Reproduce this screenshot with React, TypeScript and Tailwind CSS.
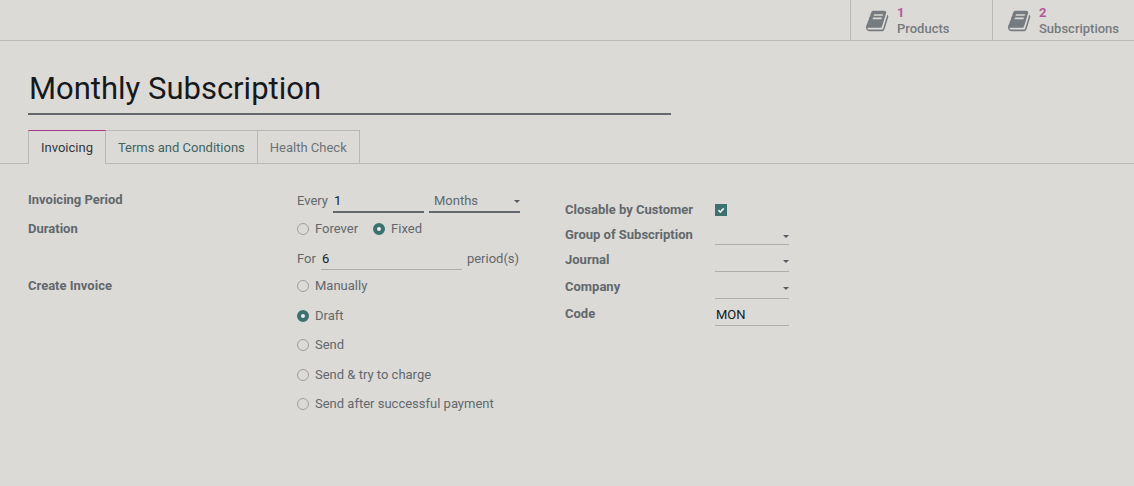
import { useState } from "react";

const BOOK =
  "M1639 478q40 57 18 129l-275 906q-19 64-76.5 107.5t-122.5 43.5h-923q-77 0-148.5-53.5t-99.5-131.5q-24-67-2-127 0-4 3-27t4-37q1-8-3-21.5t-3-19.5q2-11 8-21t16.5-23.5 16.5-23.5q23-38 45-91.5t30-91.5q3-10 .5-30t-.5-28q3-11 17-28t17-23q21-36 42-92t25-90q1-9-2.5-32t.5-28q4-13 22-30.5t22-22.5q19-26 42.5-84.5t27.5-96.5q1-8-3-25.5t-2-26.5q2-8 9-18t18-23 17-21q8-12 16.5-30.5t15-35 16-36 19.5-32 26.5-23.5 36-11.5 47.5 5.5l-1 3q38-9 51-9h761q74 0 114 56t18 130l-274 906q-36 119-71.5 153.5t-128.5 34.5h-869q-27 0-38 15-11 16-1 43 24 70 144 70h923q29 0 56-15.5t35-41.5l300-987q7-22 5-57 38 15 59 43zm-1064 2q-4 13 2 22.5t20 9.5h608q13 0 25.5-9.5t16.5-22.5l21-64q4-13-2-22.5t-20-9.5h-608q-13 0-25.5 9.5t-16.5 22.5zm-83 256q-4 13 2 22.5t20 9.5h608q13 0 25.5-9.5t16.5-22.5l21-64q4-13-2-22.5t-20-9.5h-608q-13 0-25.5 9.5t-16.5 22.5z";

function StatButton({ count, label }: { count: number; label: string }) {
  return (
    <button type="button" className="flex h-10 w-[142px] items-center gap-[7px] border-l border-[#b9b8b5] pl-[15px] pt-0.5 text-left">
      <svg viewBox="0 0 1792 1792" className="size-6 shrink-0 fill-[#767b80]" aria-hidden="true">
        <path d={BOOK} />
      </svg>
      <span className="flex flex-col font-medium leading-4">
        <span className="font-bold text-[#b4599a]">{count}</span>
        <span className="text-[#767b80]">{label}</span>
      </span>
    </button>
  );
}

function Radio({ name, label, checked, onPick }: { name: string; label: string; checked: boolean; onPick: () => void }) {
  return (
    <label className="flex h-5 items-center gap-1.5">
      <input
        type="radio"
        name={name}
        checked={checked}
        onChange={onPick}
        className="size-3 shrink-0 appearance-none rounded-full border border-[#a09f9b] checked:border-4 checked:border-[#3b7270] checked:bg-[#eeedeb]"
      />
      {label}
    </label>
  );
}

function Caret() {
  return (
    <svg viewBox="0 0 6 3" className="pointer-events-none absolute right-0 top-1/2 h-[3px] w-1.5" aria-hidden="true">
      <path d="M0 0h6L3 3z" fill="#555b60" />
    </svg>
  );
}

function SelectRow({ id, label, tall }: { id: string; label: string; tall?: boolean }) {
  return (
    <div className="flex items-start">
      <label htmlFor={id} className="w-[150px] font-bold leading-5">
        {label}
      </label>
      <div className={tall ? "w-[74px] border-b border-[#b0aeab] pb-0.5" : "w-[74px] border-b border-[#b0aeab]"}>
        <div className="relative">
          <select id={id} className="block h-[19px] w-full appearance-none bg-transparent outline-none">
            <option value=""></option>
          </select>
          <Caret />
        </div>
      </div>
    </div>
  );
}

const TABS = [
  { label: "Invoicing", color: "text-[#33383d]" },
  { label: "Terms and Conditions", color: "text-[#3f6461]" },
  { label: "Health Check", color: "text-[#6d7276]" },
];

const INVOICE_MODES = ["Manually", "Draft", "Send", "Send & try to charge", "Send after successful payment"];

export default function App() {
  const [tab, setTab] = useState(0);
  const [duration, setDuration] = useState("Fixed");
  const [mode, setMode] = useState("Draft");

  return (
    <main className="min-h-screen bg-[#dbdad6] font-['Roboto','Liberation_Sans',sans-serif] text-[13px] leading-5 text-[#62686d]">
      <header className="flex justify-end border-b border-[#b9b8b5]">
        <StatButton count={1} label="Products" />
        <StatButton count={2} label="Subscriptions" />
      </header>

      <div className="px-7 pt-6">
        <input
          aria-label="Name"
          defaultValue="Monthly Subscription"
          className="block h-[50px] w-[643px] max-w-full border-b-2 border-[#62686d] bg-transparent pb-0.5 pl-px text-[31px] text-[#16191c] outline-none"
        />
      </div>

      <div role="tablist" className="mt-[15px] flex">
        <span className="w-7 border-b border-[#b9b8b5]" />
        {TABS.map((t, i) => (
          <button
            key={t.label}
            type="button"
            role="tab"
            aria-selected={i === tab}
            onClick={() => setTab(i)}
            className={`h-[34px] border-r px-3 ${t.color} ${i === 0 ? "border-l" : ""} ${
              i === tab
                ? "border-t border-x-[#b9b8b5] border-t-[#a23a86] pt-px"
                : "border-y border-[#b9b8b5] pt-0.5"
            }`}
          >
            {t.label}
          </button>
        ))}
        <span className="flex-1 border-b border-[#b9b8b5]" />
      </div>

      <form className="grid grid-cols-2 pb-8 pl-7 pr-8 pt-6" onSubmit={(e) => e.preventDefault()}>
        <div className="flex flex-col">
          <div className="flex">
            <label htmlFor="period" className="w-[269px] pt-0.5 font-bold">
              Invoicing Period
            </label>
            <div className="flex w-[223px] items-start gap-[5px]">
              <span className="pt-[3px]">Every</span>
              <input
                id="period"
                defaultValue="1"
                className="h-[25px] w-[91px] border-b-2 border-[#62686d] bg-transparent pl-px pt-0.5 text-[#16191c] outline-none"
              />
              <div className="relative flex-1 border-b-2 border-[#62686d]">
                <select aria-label="Period unit" className="block h-[23px] w-full appearance-none bg-transparent pl-[5px] pt-0.5 outline-none">
                  <option>Months</option>
                </select>
                <Caret />
              </div>
            </div>
          </div>

          <div className="mt-1.5 flex">
            <span className="w-[269px] font-bold">Duration</span>
            <div className="flex gap-[15px]" role="radiogroup" aria-label="Duration">
              {["Forever", "Fixed"].map((d) => (
                <Radio key={d} name="duration" label={d} checked={duration === d} onPick={() => setDuration(d)} />
              ))}
            </div>
          </div>

          <div className="mt-[9px] flex pl-[269px]">
            <div className="flex w-[223px] gap-[5px]">
              <label htmlFor="count" className="pt-px">For</label>
              <input
                id="count"
                defaultValue="6"
                className="h-[22px] w-[141px] border-b border-[#b0aeab] bg-transparent pl-px text-[#16191c] outline-none"
              />
              <span className="pt-px">period(s)</span>
            </div>
          </div>

          <div className="mt-1.5 flex">
            <span className="w-[269px] font-bold">Create Invoice</span>
            <div className="flex h-[138px] flex-col justify-between" role="radiogroup" aria-label="Create Invoice">
              {INVOICE_MODES.map((m) => (
                <Radio key={m} name="mode" label={m} checked={mode === m} onPick={() => setMode(m)} />
              ))}
            </div>
          </div>
        </div>

        <div className="flex flex-col gap-[5px] pt-3">
          <div className="flex items-center">
            <label htmlFor="closable" className="w-[150px] font-bold">
              Closable by Customer
            </label>
            <span className="relative flex size-3">
              <input
                id="closable"
                type="checkbox"
                defaultChecked
                className="peer size-3 appearance-none border border-[#a09f9b] checked:border-[#3b7270] checked:bg-[#3b7270]"
              />
              <svg
                viewBox="0 0 12 12"
                className="pointer-events-none absolute inset-0 hidden size-3 peer-checked:block"
                aria-hidden="true"
              >
                <path d="M3.4 6.2l1.9 1.8L8.7 4.4" fill="none" stroke="#f1f0ee" strokeWidth="1.6" />
              </svg>
            </span>
          </div>
          <SelectRow id="group" label="Group of Subscription" />
          <SelectRow id="journal" label="Journal" tall />
          <SelectRow id="company" label="Company" tall />
          <div className="flex items-start">
            <label htmlFor="code" className="w-[150px] font-bold">
              Code
            </label>
            <input
              id="code"
              defaultValue="MON"
              className="h-[22px] w-[74px] border-b border-[#b0aeab] bg-transparent pl-px text-[#16191c] outline-none"
            />
          </div>
        </div>
      </form>
    </main>
  );
}
